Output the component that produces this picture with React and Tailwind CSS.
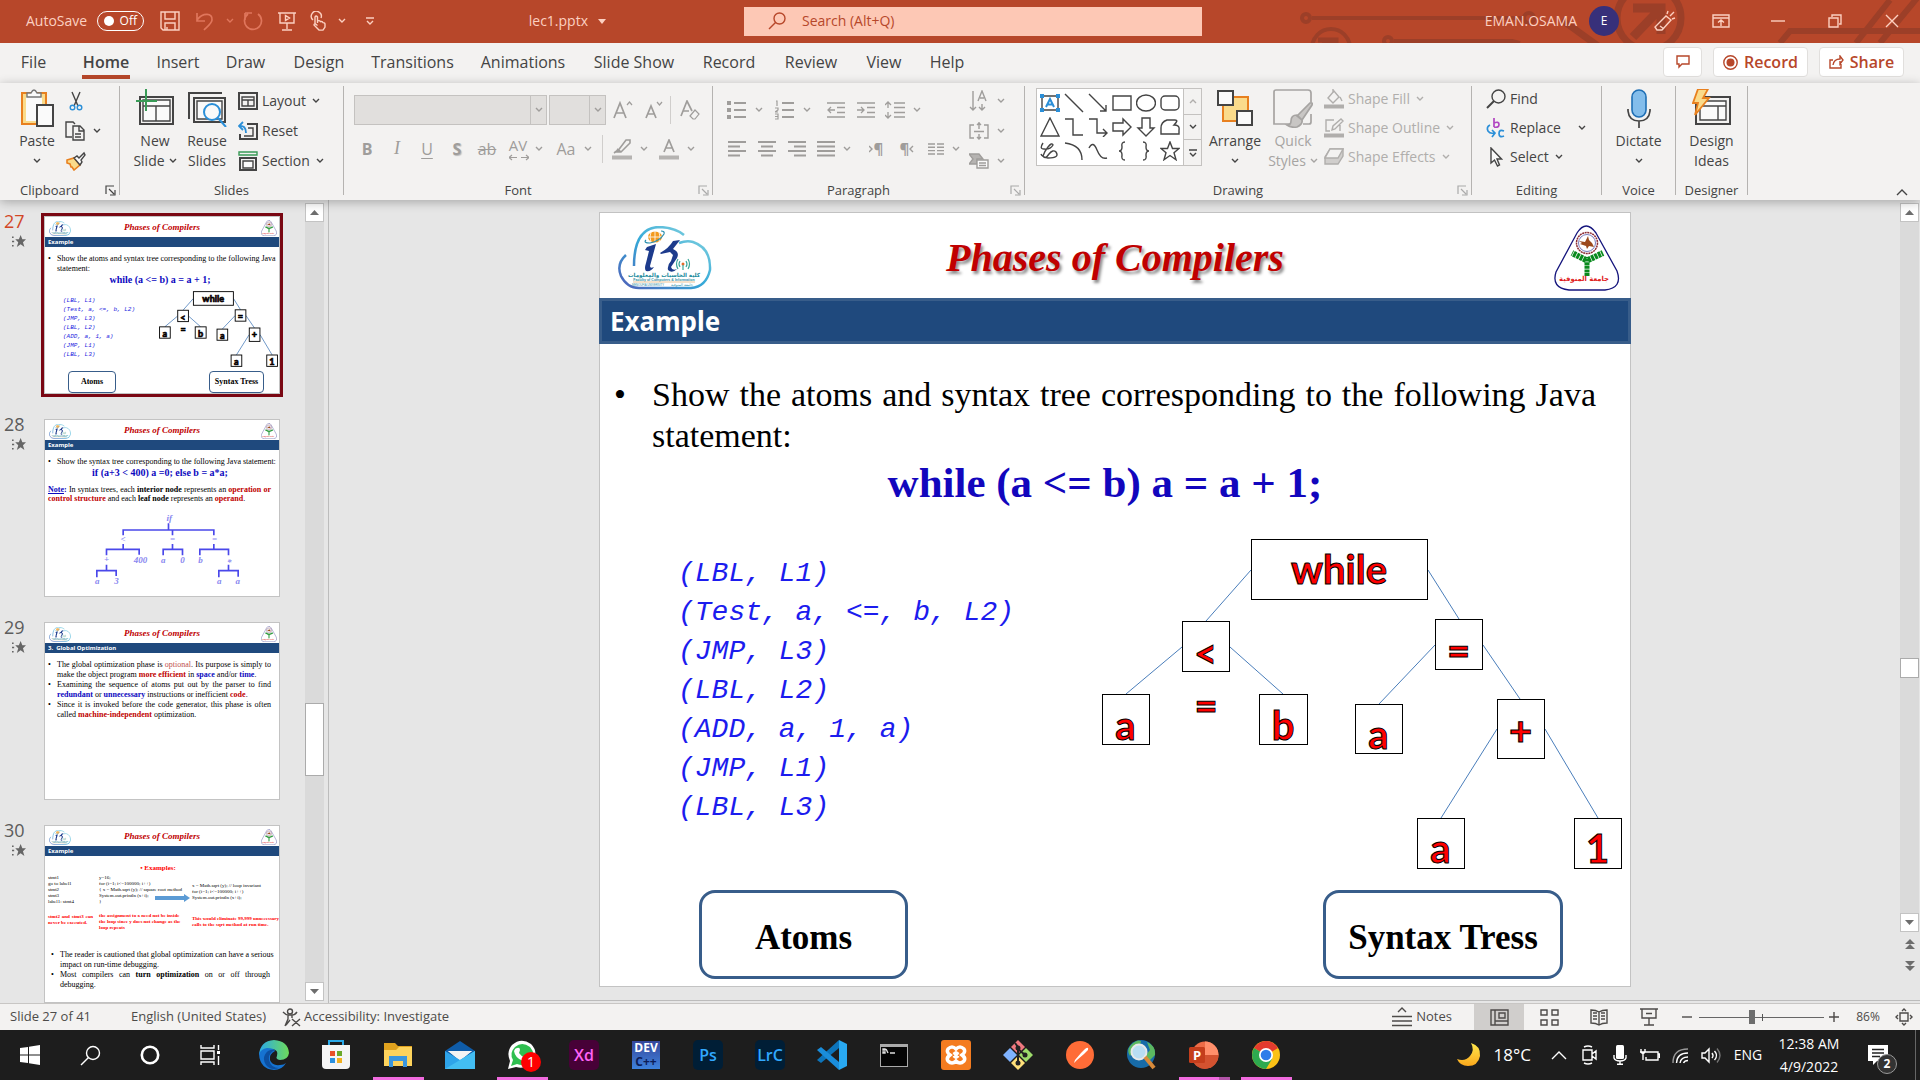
import React from "react";

const Svg = ({ w = 20, h, vb, children, className = "", ...p }) => (
  <svg width={w} height={h || w} viewBox={vb || `0 0 ${w} ${h || w}`} fill="none" stroke="currentColor" strokeWidth="1.4" className={"shrink-0 " + className} aria-hidden="true" {...p}>
    {children}
  </svg>
);

const Chev = ({ className = "" }) => (
  <Svg w={8} h={6} className={className}><path d="M1 1l3 3 3-3" /></Svg>
);

/* ---------- Title bar ---------- */
function TitleBar() {
  return (
    <header className="relative h-[43px] shrink-0 bg-[#b7472a] pb-px text-[#fcd0c1] text-sm flex items-center overflow-hidden">
      <svg className="absolute right-0 top-0" width="640" height="43" viewBox="1280 0 640 43" fill="none" stroke="#9c3f28" strokeWidth="4" aria-hidden="true">
        <circle cx="1306" cy="18" r="4" />
        <path d="M1312 18H1524M1394 41H1512l8 2" />
        <circle cx="1331" cy="48" r="19" />
        <path d="M1318 40h18v3h-14" strokeWidth="5" />
        <circle cx="1388" cy="41" r="4" />
        <circle cx="1529" cy="18" r="5" />
        <path d="M1562 20l36 26" strokeWidth="7" />
        <circle cx="1649" cy="18" r="32" strokeWidth="7" />
        <path d="M1633 8h28v26M1659 10l-26 27" strokeWidth="9" />
        <path d="M1780 43l10-12h130M1856 43l34-43M1880 43l38-46" strokeWidth="6" />
      </svg>
      <div className="relative flex flex-1 items-center pl-[26px]">
        <label className="flex items-center gap-2">
          <span className="w-[63px] whitespace-nowrap">AutoSave</span>
          <input type="checkbox" className="peer sr-only" />
          <span className="flex h-5 w-[47px] items-center justify-between rounded-full border border-white pl-1.5 pr-1.5 text-xs text-white">
            <i className="block size-[10px] rounded-full bg-white" />Off
          </span>
        </label>
        <div className="ml-4 flex items-center">
          <button aria-label="Save" className="w-[35px]">
            <Svg w={20} h={20}><path d="M1 1h18v18H3l-2-2zM5 1v7h10V1M5 19v-7h10v7M7 16v3" /></Svg>
          </button>
          <button aria-label="Undo" className="flex w-[48px] items-center gap-3 text-[#e0765c]">
            <Svg w={19} h={20} strokeWidth="1.7"><path d="M2 2v8h8M2 9C8 1 18 2 17 9c0 3-5 7-8 10" /></Svg><Chev />
          </button>
          <button aria-label="Redo" className="w-[34px] text-[#e0765c]">
            <Svg w={20} h={20} strokeWidth="1.7"><path d="M2 2v7M2 2h7M5 3a8.500 8.500 0 1 0 10 0" /></Svg>
          </button>
          <button aria-label="Start presentation" className="w-[33px]">
            <Svg w={20} h={20} ><path d="M1 2h18M3 2v10h14V2M10 12v6M5 19h10M8.500 4.500v5l4-2.500z" /></Svg>
          </button>
          <button aria-label="Touch mode" className="flex w-[51px] items-center gap-3">
            <Svg w={16} h={20}><path d="M3 9a5 5 0 1 1 8-2M5 13V6q1-2 2.500 0v6-2q2-1 3 .6q2-.6 2.500 1q2 0 2 1.500v3l-2 3H9L4 14q0-1.500 1.500-1l2 1.500" /></Svg><Chev />
          </button>
          <button aria-label="Customize toolbar" className="pl-1">
            <Svg w={10} h={8}><path d="M1 1h8M2 4l3 3 3-3" /></Svg>
          </button>
        </div>
        <button className="ml-auto mr-[138px] flex items-center gap-2.5">lec1.pptx
          <Svg w={8} h={5} stroke="none" fill="currentColor"><path d="M0 0h8l-4 5z" /></Svg>
        </button>
      </div>
      <label className="relative flex h-[29px] w-[458px] items-center gap-4 bg-[#fdc8b5] pl-6 text-[#b7472a]">
        <Svg w={18} h={18}><circle cx="11.500" cy="6.500" r="5.500" /><path d="M7.500 10.500L1 17" /></Svg>
        <input aria-label="Search" placeholder="Search (Alt+Q)" className="flex-1 bg-transparent outline-none placeholder:text-[#b7472a]" />
      </label>
      <div className="relative flex flex-1 items-center justify-end">
        <span>EMAN.OSAMA</span>
        <span className="ml-3 grid size-[30px] place-items-center rounded-full bg-[#37307a] text-xs text-white">E</span>
        <div className="ml-[26px] flex items-center">
          <button aria-label="What's new" className="grid w-10 place-items-center">
            <Svg w={22} h={22}><path d="M3 20l-2-3L12 6l5 4-9 10zM6 16l4 3M13 4l1-3M16 6l4-4M18 9l3-1" /></Svg>
          </button>
          <button aria-label="Ribbon display options" className="ml-4 grid w-10 place-items-center">
            <Svg w={18} h={14}><path d="M1 1h16v12H1zM1 4h16M9 12V6M6 8.500L9 6l3 2.500" /></Svg>
          </button>
          <button aria-label="Minimize" className="grid w-[57px] place-items-center ml-2"><Svg w={14} h={4}><path d="M0 2h14" /></Svg></button>
          <button aria-label="Restore" className="grid w-[57px] place-items-center"><Svg w={14} h={14}><path d="M1 4h9v9H1zM4 3V1h9v9h-2" /></Svg></button>
          <button aria-label="Close" className="grid w-[57px] place-items-center"><Svg w={14} h={14}><path d="M1 1l12 12M13 1L1 13" /></Svg></button>
        </div>
      </div>
    </header>
  );
}

/* ---------- Tabs ---------- */
const tabs = [
  ["File", "w-[53px] mr-2"], ["Home", "w-[76px] font-semibold"], ["Insert", "w-[68px]"], ["Draw", "w-[67px]"], ["Design", "w-[80px]"],
  ["Transitions", "w-[107px]"], ["Animations", "w-[114px]"], ["Slide Show", "w-[108px]"], ["Record", "w-[82px]"],
  ["Review", "w-[82px]"], ["View", "w-[64px]"], ["Help", "w-[62px]"],
];
function Tabs() {
  return (
    <nav className="flex h-10 shrink-0 items-center bg-[#f3f2f1] pr-4 pb-0.5 text-[#444]">
      <div className="flex h-full items-center pl-[7px] text-base">
        {tabs.map(([t, c]) => (
          <button key={t} className={"relative flex h-full items-center justify-center whitespace-nowrap " + c}>
            {t}
            {t === "Home" && <i className="absolute bottom-0.5 left-[14px] right-[14px] h-1 bg-[#b7472a]" />}
          </button>
        ))}
      </div>
      <div className="ml-auto flex gap-[11px] text-base font-semibold text-[#b7472a]">
        <button aria-label="Comments" className="grid h-[30px] w-[39px] place-items-center rounded-sm border border-[#e1dfdd] bg-white">
          <Svg w={14} h={14}><path d="M1 1h12v8H6l-3 3V9H1z" /></Svg>
        </button>
        <button className="flex h-[30px] w-[95px] items-center justify-center gap-1.5 rounded-sm border border-[#e1dfdd] bg-white">
          <Svg w={15} h={15}><circle cx="7.500" cy="7.500" r="6.700" /><circle cx="7.500" cy="7.500" r="4" fill="currentColor" stroke="none" /></Svg>Record
        </button>
        <button className="flex h-[30px] w-[85px] items-center justify-center gap-1.5 rounded-sm border border-[#e1dfdd] bg-white">
          <Svg w={15} h={14}><path d="M4 5H1v8h11V9M4 10q1-6 7-6V1l3 4-3 4V6" /></Svg>Share
        </button>
      </div>
    </nav>
  );
}

/* ---------- Ribbon ---------- */
function Group({ label, w, launcher, dim, children }) {
  return (
    <section className={"relative mt-[3px] flex shrink-0 flex-col pr-px pb-px " + w}>
      <i className="absolute bottom-[5px] right-0 top-0 w-px bg-[#b5b3b1]" />
      <div className="flex flex-1">{children}</div>
      <div className={"relative h-[18px] text-center text-[13px] leading-[18px] " + (launcher ? "pr-5" : "")}>
        {label}
        {launcher && (
          <button aria-label={label + " settings"} className={"absolute bottom-[3px] right-[3px] " + (dim ? "text-[#aaa]" : "")}>
            <Svg w={11} h={11} strokeWidth="1.200"><path d="M1 9V1h8M4 4l5 5M10 5v5H5" /></Svg>
          </button>
        )}
      </div>
    </section>
  );
}
const Big = ({ icon, l1, l2, chev, w, dim }) => (
  <button className={"flex flex-col items-center pt-[2px] leading-5 " + w + (dim ? " text-[#a6a4a2]" : "")}>
    <span className="mb-[3px] grid h-10 place-items-center">{icon}</span>
    <span>{l1}</span>
    <span className="flex h-5 items-center gap-1">{l2}{chev && <Chev />}</span>
  </button>
);
const Row = ({ icon, t, chev, h = "h-[30px]", dim, gap = "gap-1.5" }) => (
  <button className={"flex items-center whitespace-nowrap " + gap + " " + h + (dim ? " text-[#b0aeac]" : "")}>
    <span className="grid w-5 place-items-center">{icon}</span>
    <span className="flex items-center gap-1.5 -ml-0.5">{t}{chev && <Chev />}</span>
  </button>
);
const Cell = ({ w = "w-[30px]", label, chev, children }) => (
  <button aria-label={label} className={"flex h-[30px] items-center justify-center gap-2 " + w}>{children}{chev && <Chev />}</button>
);

const Lines = ({ x = [0, 0, 0, 0], e = [18, 12, 18, 12] }) => (
  <Svg w={18} h={18} strokeWidth="2">{x.map((a, i) => <path key={i} d={`M${a} ${2 + i * 4.500}H${e[i]}`} />)}</Svg>
);
const shapes = [
  <><path d="M2 3h16v14H2z" /><path d="M6 14l4-8 4 8M7.500 11.500h5" stroke="#2b8fd8" strokeWidth="2" /><g fill="#2b8fd8" stroke="none"><path d="M0 1h4v4H0zM16 1h4v4h-4zM0 15h4v4H0zM16 15h4v4h-4z" /></g></>,
  <path d="M1 1l18 18" />, <path d="M1 1l17 17M18 12v6h-6" />, <path d="M1 3h18v14H1z" />, <ellipse cx="10" cy="10" rx="9.500" ry="8" />, <rect x="1" y="3" width="18" height="14" rx="4" />,
  <path d="M10 1l9 18H1z" />, <path d="M1 2h8v16h10" />, <path d="M1 2h8v14h10M15 12l4 4-4 4" />, <path d="M1 6h10V2l8 8-8 8v-4H1z" />, <path d="M6 1h8v10h4l-8 8-8-8h4z" />, <path d="M7 3h8q4 0-1 5 6 0 5 5v4H1v-6q0-6 6-8z" />,
  <path d="M3 2Q-1 8 4 8q6 1 9-4-1-3-5 2-4 5-5 9 2 4 6-2 4-5 7-2 4 6-8 6-6-1-7-4" />, <path d="M1 2q17 2 17 17" />, <path d="M1 7q4-8 8 2t10 8" />, <path d="M13 1q-4 0-3 5 0 4-3 4 3 0 3 4-1 5 3 5" />, <path d="M7 1q4 0 3 5 0 4 3 4-3 0-3 4 1 5-3 5" />, <path d="M10 1l2.500 6.500H19l-5 4.200 2 7-6-4.200-6 4.200 2-7-5-4.200h6.500z" />,
];

function Ribbon() {
  return (
    <div className="flex h-[117px] shrink-0 bg-[#f3f2f1] text-sm text-[#444] relative z-10 shadow-[0_2px_10px_rgba(0,0,0,0.28)]">
      <Group label="Clipboard" w="w-[120px]" launcher>
        <Big w="ml-[17px] w-[40px]" l1="Paste" chev icon={
          <Svg w={36} h={40}><path d="M3 5h24v31H3z" fill="#fadb8b" stroke="#e8801f" strokeWidth="2" /><path d="M7 9h16v24H7z" fill="#fafafa" stroke="none" /><path d="M8 9V5h4q3-6 6 0h4v4z" fill="#fafafa" stroke="#777" /><path d="M18 17h16v21H18z" fill="#fafafa" strokeWidth="2" /></Svg>} />
        <div className="ml-1 flex flex-col">
          <Cell label="Cut"><Svg w={14} h={20}><path d="M3 1l6 14M11 1L5 15" /><circle cx="3.500" cy="16.500" r="2.300" stroke="#2b8fd8" /><circle cx="10.500" cy="16.500" r="2.300" stroke="#2b8fd8" /></Svg></Cell>
          <Cell label="Copy" chev w="w-[44px]"><Svg w={20} h={20}><path d="M7 16H1V1h7l2 2M8 5h7l4 4v10H8zM14 5v5h5M10 13h6M10 16h6" /></Svg></Cell>
          <Cell label="Format Painter"><Svg w={20} h={20}><path d="M1 9l7-2 6 7-6 5-2-3-1 0-1-3-3-1z" fill="#fadb8b" stroke="#e8801f" strokeWidth="1.600" /><path d="M8 7l3-2 2 2 5-5 1 2-4 5 1 2-2 3z" fill="#fafafa" /></Svg></Cell>
        </div>
      </Group>

      <Group label="Slides" w="w-[224px]">
        <Big w="ml-[7px] w-[56px]" l1="New" l2="Slide" chev icon={
          <Svg w={40} h={38}><path d="M5 8h33v27H5z" strokeWidth="2" /><path d="M8 11h27v21H8z" fill="#fafafa" /><path d="M8 17h27M21 17v15" /><path d="M11 0v22M1 12h21" stroke="#3a9b57" strokeWidth="2" /></Svg>} />
        <Big w="w-[48px]" l1="Reuse" l2="Slides" icon={
          <Svg w={40} h={38}><path d="M2 30V4h33" strokeWidth="2" /><path d="M7 9h31v24H7z" strokeWidth="2" /><path d="M10 12h25v18H10z" fill="#fafafa" /><circle cx="25" cy="23" r="8" fill="#fafafa" stroke="#2b8fd8" strokeWidth="2" /><path d="M31 29l8 9" stroke="#2b8fd8" strokeWidth="2" /></Svg>} />
        <div className="ml-[7px] flex flex-col">
          <Row t="Layout" chev icon={<Svg w={20} h={18}><path d="M1 1h18v16H1z" strokeWidth="2" /><path d="M4 5h12v9H4zM4 8h12M10 8v6" /></Svg>} />
          <Row t="Reset" icon={<Svg w={20} h={20}><path d="M9 3h10v15H2v-5" strokeWidth="2" /><path d="M10 7h5v8H6" /><path d="M5 1L1 5l4 4M1 5q7-1 7 7" stroke="#2b8fd8" strokeWidth="1.800" /></Svg>} />
          <Row t="Section" chev icon={<Svg w={20} h={20}><path d="M1 1h18v3H1z" stroke="#3a9b57" /><path d="M2 7h16v12H2z" strokeWidth="2" /><path d="M5 10h10v7H5z" fill="#fafafa" /></Svg>} />
        </div>
      </Group>

      <Group label="Font" w="w-[369px]" launcher dim>
        <div className="flex flex-1 flex-col pl-[8px] text-[#9f9d9b]">
          <div className="mt-[9px] flex h-[30px] items-center">
            <div className="ml-[2px] flex h-full w-[193px] border border-[#c4c2c0] bg-[#e1dfdd]"><input aria-label="Font name" disabled className="w-0 flex-1" /><button aria-label="Fonts" className="grid w-4 place-items-center border-l border-[#c4c2c0]"><Chev /></button></div>
            <div className="ml-[2px] flex h-full w-[57px] border border-[#c4c2c0] bg-[#e1dfdd]"><input aria-label="Font size" disabled className="w-0 flex-1" /><button aria-label="Sizes" className="grid w-4 place-items-center border-l border-[#c4c2c0]"><Chev /></button></div>
            <Cell label="Increase font size" w="w-[34px]"><Svg w={20} h={18} strokeWidth="1.700"><path d="M1 17L7 2l6 15M3 12h8" /><path d="M14 4l2.500-3 2.500 3" strokeWidth="1.200" /></Svg></Cell>
            <Cell label="Decrease font size" w="w-[28px]"><Svg w={18} h={18} strokeWidth="1.700"><path d="M1 17L6 5l5 12M3 13h6" /><path d="M12 1l2.500 3L17 1" strokeWidth="1.200" /></Svg></Cell>
            <i className="mx-0.5 h-7 w-px bg-[#d0cecc]" />
            <Cell label="Clear formatting" w="w-[34px]"><Svg w={20} h={20} strokeWidth="1.700"><path d="M1 16L7 1l5 10M3 11h6" /><path d="M10 16l5-6 4 4-4 5h-2z" strokeWidth="1.200" /></Svg></Cell>
          </div>
          <div className="mt-[9px] flex items-center">
            <Cell label="Bold"><b className="text-base">B</b></Cell>
            <Cell label="Italic"><i className="font-['Liberation_Serif',serif] text-[18px]">I</i></Cell>
            <Cell label="Underline"><u className="text-base underline-offset-3">U</u></Cell>
            <Cell label="Shadow"><b className="text-base [text-shadow:1px_1px_1px_#bbb]">S</b></Cell>
            <Cell label="Strikethrough"><s className="text-base">ab</s></Cell>
            <Cell label="Character spacing" chev w="w-[48px]"><span className="relative text-[15px] leading-4 pb-2">AV<Svg w={20} h={7} className="absolute bottom-0 left-0" strokeWidth="1.200"><path d="M3 1L0 3.500 3 6M0 3.500h8M17 1l3 2.500L17 6M12 3.500h8" /></Svg></span></Cell>
            <Cell label="Change case" chev w="w-[48px]"><span className="text-base">Aa</span></Cell>
            <i className="mx-1 h-7 w-px bg-[#d0cecc]" />
            <Cell label="Highlight" chev w="w-[46px]"><Svg w={20} h={21}><path d="M5 13L14 1h4v3L9 13zM5 10l4 3M2 14l4-3" strokeWidth="1.600" /><path d="M0 18.500h20" strokeWidth="4" stroke="#b5b3b1" /></Svg></Cell>
            <Cell label="Font color" chev w="w-[48px]"><Svg w={20} h={21}><path d="M5 13L10 1l5 12M7 9h6" strokeWidth="1.700" /><path d="M0 18.500h20" strokeWidth="4" stroke="#b5b3b1" /></Svg></Cell>
          </div>
        </div>
      </Group>

      <Group label="Paragraph" w="w-[312px]" launcher dim>
        <div className="flex flex-col pl-[14px] text-[#9f9d9b]">
          <div className="mt-[9px] flex h-[30px] items-center">
            <Cell label="Bullets" chev w="w-[36px]"><Svg w={20} h={18} strokeWidth="2"><path d="M7 2h12M7 9h12M7 16h12" /><path d="M0 2h4M0 9h4M0 16h4" strokeWidth="4" /></Svg></Cell>
            <Cell label="Numbering" chev w="w-[60px]"><Svg w={20} h={20} strokeWidth="2"><path d="M7 3h12M7 10h12M7 17h12" /><path d="M1 1h1v5M0 8h3v2l-3 2h3M0 14h3v5H0M0 16.500h3" strokeWidth="1.200" /></Svg></Cell>
            <Cell label="Decrease indent" w="w-[26px]"><Svg w={18} h={18} strokeWidth="1.700"><path d="M0 2h18M10 6.500h8M10 11.500h8M0 16h18" /><path d="M8 9H1M4 6L1 9l3 3" strokeWidth="1.300" /></Svg></Cell>
            <Cell label="Increase indent" w="w-[34px]"><Svg w={18} h={18} strokeWidth="1.700"><path d="M0 2h18M10 6.500h8M10 11.500h8M0 16h18" /><path d="M0 9h7M4 6l3 3-3 3" strokeWidth="1.300" /></Svg></Cell>
            <Cell label="Line spacing" chev w="w-[40px]"><Svg w={20} h={18} strokeWidth="1.700"><path d="M9 2h11M9 6.500h11M9 11.500h11M9 16h11" /><path d="M3 1v6M0 4l3-3 3 3M3 17v-6M0 14l3 3 3-3" strokeWidth="1.300" /></Svg></Cell>
          </div>
          <div className="mt-[9px] flex items-center">
            <Cell label="Align left" w="w-[19px]"><Lines /></Cell>
            <Cell label="Align center" w="w-[41px]"><Lines x={[0, 3, 0, 3]} e={[18, 15, 18, 15]} /></Cell>
            <Cell label="Align right" w="w-[19px]"><Lines x={[0, 6, 0, 6]} e={[18, 18, 18, 18]} /></Cell>
            <Cell label="Justify" chev w="w-[56px]"><Lines e={[18, 18, 18, 18]} /></Cell>
            <Cell label="Left to right" w="w-[28px]"><span className="flex items-center font-bold text-[15px]"><Svg w={5} h={8}><path d="M0 1l3 3-3 3" /></Svg>¶</span></Cell>
            <Cell label="Right to left" w="w-[34px]"><span className="flex items-center font-bold text-[15px]">¶<Svg w={5} h={8}><path d="M4 1L1 4l3 3" /></Svg></span></Cell>
            <Cell label="Columns" chev w="w-[40px]"><Svg w={16} h={12}><path d="M0 1h7M0 4.300h7M0 7.600h7M0 11h7M9 1h7M9 4.300h7M9 7.600h7M9 11h7" /></Svg></Cell>
          </div>
        </div>
        <div className="ml-auto mr-[14px] flex flex-col text-[#9f9d9b]">
          <Cell label="Text direction" chev w="w-[46px]"><Svg w={20} h={22}><path d="M4 1v19M1 17l3 3 3-3M13 14v6M10 17l3 3 3-3" /><path d="M9 11l4-10 4 10M11 8h4" /></Svg></Cell>
          <Cell label="Align text" chev w="w-[46px]"><Svg w={20} h={18}><path d="M5 3H1v13h4M15 3h4v13h-4M5 9.500h10M10 0v7M10 12v6M8 3l2-2 2 2M8 15l2 2 2-2" /></Svg></Cell>
          <Cell label="SmartArt" chev w="w-[46px]"><Svg w={20} h={18}><path d="M0 2h10l4 5H8v5H0l4-5z" fill="#b5b3b1" /><path d="M8 8h11v8H8zM10 11h7M10 13.500h7" fill="#fafafa" /></Svg></Cell>
        </div>
      </Group>

      <Group label="Drawing" w="w-[447px]" launcher dim>
        <div className="mt-[2px] ml-[11px] flex h-[78px] border border-[#c4c2c0] bg-white">
          <div className="grid grid-cols-6 content-center gap-x-1 gap-y-1 px-[3px]">
            {shapes.map((s, i) => <button key={i} aria-label={"Shape " + (i + 1)}><Svg w={20} h={20} >{s}</Svg></button>)}
          </div>
          <div className="flex w-[18px] flex-col border-l border-[#c4c2c0] bg-[#f3f2f1]">
            <button aria-label="Up" className="grid flex-1 place-items-center text-[#b0aeac]"><Chev className="rotate-180" /></button>
            <button aria-label="Down" className="grid flex-1 place-items-center border-y border-[#c4c2c0]"><Chev /></button>
            <button aria-label="More shapes" className="grid flex-1 place-items-center"><Svg w={10} h={8}><path d="M1 1h8M2 4l3 3 3-3" /></Svg></button>
          </div>
        </div>
        <Big w="ml-[4px] w-[58px]" l1="Arrange" chev icon={
          <Svg w={38} h={38}><path d="M7 8h25v24H7z" fill="#fadb8b" stroke="#e8801f" strokeWidth="2" /><path d="M2 2h15v14H2zM21 22h15v14H21z" fill="#fafafa" strokeWidth="2" /></Svg>} />
        <Big w="w-[56px] ml-px" dim l1="Quick" l2="Styles" chev icon={
          <Svg w={40} h={40} strokeWidth="1.700"><path d="M18 36H1V4q0-2 2-2h32q3 0 3 3v9M38 26v8q0 2-2 2h-6" /><path d="M24 28L37 15q3-1 2 2L29 32zM24 27q-6 0-6 6 0 4-4 4 4 3 10 2 6-3 5-7z" fill="#c8c6c4" /></Svg>} />
        <div className="ml-[3px] -mt-0.5 flex flex-col">
          <Row dim h="h-[29px]" t="Shape Fill" chev icon={<Svg w={20} h={20}><path d="M4 9l6-7 5 6-6 6zM9 4V0M16 8l2 4" /><path d="M0 17.500h20" strokeWidth="4" /></Svg>} />
          <Row dim h="h-[29px]" t="Shape Outline" chev icon={<Svg w={20} h={20}><path d="M10 2H2v11h4M8 12l1-4 8-7 2 2-8 8zM16 7v6" /><path d="M0 17.500h20" strokeWidth="4" /></Svg>} />
          <Row dim h="h-[29px]" t="Shape Effects" chev icon={<Svg w={20} h={17}><path d="M6 1h13v7l-5 8H1V9z" fill="#d0cecc" /><path d="M6 1h13l-5 9H1z" fill="#f3f2f1" /></Svg>} />
        </div>
      </Group>

      <Group label="Editing" w="w-[130px]">
        <div className="ml-[14px] -mt-0.5 flex flex-col">
          <Row h="h-[29px]" t="Find" icon={<Svg w={20} h={20}><circle cx="12.500" cy="7.500" r="6.500" /><path d="M8 12l-7 7" strokeWidth="2" /></Svg>} />
          <Row h="h-[29px]" t={<span className="w-[62px] text-left">Replace</span>} chev icon={<Svg w={20} h={20}><path d="M8 0v9M8 5q5-2 5 1.500T8 9" stroke="#b146c2" strokeWidth="1.700" /><path d="M18 13q-5-2-5 2.500t5 2.500" stroke="#2b8fd8" strokeWidth="1.700" /><path d="M4 7q-4 2-2 6 2 3 6 2M6 12l3 3-3 4" stroke="#2b8fd8" strokeWidth="1.700" /></Svg>} />
          <Row h="h-[29px]" t="Select" chev icon={<Svg w={14} h={20}><path d="M2 1v15l3.500-3 3 6 2-1-2.500-6h4.500z" fill="#fafafa" /></Svg>} />
        </div>
      </Group>
      <Group label="Voice" w="w-[74px]">
        <Big w="w-full" l1="Dictate" chev icon={<Svg w={24} h={40}><rect x="5" y="2" width="14" height="27" rx="7" fill="#83bdeb" stroke="#1f6fb5" strokeWidth="1.600" /><path d="M1 21v2q1 10 11 10t11-10v-2M12 33v7" strokeWidth="1.700" /></Svg>} />
      </Group>
      <Group label="Designer" w="w-[72px]">
        <Big w="w-full" l1="Design" l2="Ideas" icon={<Svg w={40} h={38}><path d="M4 8h34v27H4z" strokeWidth="2" /><path d="M8 12h26v19H8z" fill="#fafafa" /><path d="M8 17h26M26 17v14" /><path d="M6 0h10l-5 9h6L3 26l3-12H1z" fill="#fadb8b" stroke="#e8801f" strokeWidth="1.800" /></Svg>} />
      </Group>
      <button aria-label="Collapse ribbon" className="ml-auto mb-1 mr-3 self-end"><Svg w={12} h={8} ><path d="M1 7l5-5 5 5" /></Svg></button>
    </div>
  );
}

/* ---------- Slide parts ---------- */
const CloudLogo = ({ className }) => (
  <svg viewBox="0 0 94 64" className={"shrink-0 " + className} fill="none" role="img" aria-label="Faculty of Computers and Information">
    <defs>
      <linearGradient id="cl" x1="0" x2="1" y1="1" y2="0"><stop offset="0" stopColor="#4f5fb8" /><stop offset=".5" stopColor="#35a9d8" /><stop offset="1" stopColor="#8fd8e0" /></linearGradient>
    </defs>
    <path d="M8 29Q-2 38 3 50q6 12 18 12h52q15-1 19-18 1-22-17-28-6-2-14 1M16 40C16 12 26 1 42 1q16 1 24 8" stroke="url(#cl)" strokeWidth="2.500" />
    <ellipse cx="37" cy="11" rx="7" ry="5.500" fill="#f39a1e" /><path d="M30 11h14M37 5v12M33 6q-2 5 0 10M41 6q2 5 0 10" stroke="#fff" strokeWidth=".8" />
    <path d="M28 14q-3 3 4 3 10-2 14-9 1-3-3-3" stroke="#2c8fae" strokeWidth="1.200" />
    <path d="M29 21l9-3-6 22q0 3 4 1-3 5-8 4-2-2 0-8l3-12-4-1z" fill="#1d3b8c" />
    <path d="M42 27q9-5 13-12l7-1-7 9q7 3 4 9l-6 9q1 4 6 2-5 5-9 1-1-5 3-9l2-6-3-3-9 2z" fill="#1d3b8c" />
    <circle cx="65" cy="38" r="1.500" fill="#e46a2b" /><path d="M65 39v5M62 35q-2 3 0 6M68 35q2 3 0 6M60 33q-3 5 0 10M70 33q3 5 0 10" stroke="#3aa79a" strokeWidth="1.200" />
    <text x="46" y="51" fontSize="5.6" fontWeight="bold" textAnchor="middle" fill="#218a9c" fontFamily="DejaVu Sans">كلية الحاسبات والمعلومات</text>
    <text x="46" y="55" fontSize="3.6" fontWeight="bold" textAnchor="middle" fill="#2f8fa5" fontFamily="Liberation Sans">Faculty of Computers &amp; Information</text>
    <path d="M15 56h62" stroke="#e2aa68" strokeWidth=".7" />
    <text x="30" y="60" fontSize="2.8" textAnchor="middle" fill="#2f8fa5" fontFamily="Liberation Sans">MENOUFIA UNIVERSITY</text>
    <text x="64" y="60" fontSize="3.6" textAnchor="middle" fill="#2f8fa5" fontFamily="DejaVu Sans">جامعة المنوفية</text>
  </svg>
);
const TriLogo = ({ className }) => (
  <svg viewBox="0 0 66 66" className={"shrink-0 " + className} fill="none" role="img" aria-label="Menoufia University">
    <path d="M23 8q9-14 19 0l21 38q6 17-12 19H15Q-3 63 2 47z" stroke="#14147c" strokeWidth="1.300" fill="#fff" />
    <circle cx="33" cy="18" r="10.500" stroke="#8c2c34" strokeWidth="1.500" strokeDasharray="2 .6" /><circle cx="33" cy="18" r="8.500" stroke="#5658a8" strokeWidth=".8" />
    <path d="M25 16l6 1 3-6 1 4 3 3 2 4-5-1-2 3-1-3-6-2 2-1z" fill="#9c4a1c" />
    <path d="M33 51V34" stroke="#0a8a1e" strokeWidth="5" strokeDasharray="3 .6" /><path d="M32 35L18 28M34 35l15-7" stroke="#0a8a1e" strokeWidth="6" strokeDasharray="3 .7" />
    <text x="30" y="56" fontSize="6.800" fontWeight="bold" textAnchor="middle" fill="#e02020" fontFamily="DejaVu Sans">جامعة المنوفية</text>
  </svg>
);

const nodes = [
  [1251, 539, 176, 60, "while", 584], [1182, 621, 47, 50, "<", 668], [1435, 619, 47, 50, "=", 665],
  [1102, 694, 47, 50, "a", 740], [1259, 694, 48, 50, "b", 740], [1355, 704, 47, 49, "a", 749],
  [1497, 699, 47, 59, "+", 745], [1417, 818, 47, 50, "a", 863], [1574, 818, 47, 50, "1", 863],
];
const SyntaxTree = ({ small, className }) => (
  <svg viewBox="1100 537 524 334" className={className} fill="none" role="img" aria-label="Syntax tree">
    <path d="M1251 570L1206 621M1428 570L1459 619M1182 647L1126 694M1230 647L1283 694M1435 645L1379 704M1483 645L1520 699M1497 729L1441 818M1545 729L1598 818" stroke="#4a7ebb" strokeWidth={small ? 3.5 : 1} />
    {nodes.map(([x, y, w, h], i) => <rect key={i} x={x + 0.5} y={y + 0.5} width={w} height={h} fill="#fff" stroke="#000" strokeWidth={small ? 4 : 1} />)}
    <g fontFamily="Lato, sans-serif" fontWeight="bold" fontSize="40" fill={small ? "#300" : "#f00"} stroke="#000" strokeWidth={small ? 3 : 1} textAnchor="middle">
      {nodes.map(([x, , w, , t, b], i) => <text key={i} x={x + w / 2} y={b}>{t}</text>)}
      <text x="1206" y="720">=</text>
    </g>
  </svg>
);

const atoms = ["(LBL, L1)", "(Test, a, <=, b, L2)", "(JMP, L3)", "(LBL, L2)", "(ADD, a, 1, a)", "(JMP, L1)", "(LBL, L3)"];
const SERIF = " font-['Liberation_Serif',serif] ";

function Slide() {
  return (
    <article className="flex w-[1032px] flex-col border border-[#c3c3c3] bg-white text-black">
      <div className="flex h-[85px] items-center justify-between pl-[18px] pr-[10px] pt-[5px]">
        <CloudLogo className="h-[64px] w-[94px]" />
        <h1 className={"mr-9 text-[40px] font-bold italic text-[#c00000] [text-shadow:2px_3px_3px_rgba(0,0,0,0.45)]" + SERIF}>Phases of Compilers</h1>
        <TriLogo className="h-[66px] w-[66px]" />
      </div>
      <h2 className="-mx-px flex h-[46px] items-center border-3 border-[#385d8a] bg-[#1f497d] pl-2 pt-px text-[26px] font-bold text-white font-['Noto_Sans',sans-serif]">Example</h2>
      <div className={"relative flex-1" + SERIF}>
        <ul className="pl-[14px] pr-[34px] pt-[30px] text-[34px] leading-[41px]">
          <li className="flex">
            <span className="w-[38px]">•</span>
            <div className="flex-1 whitespace-nowrap">
              <div className="[text-align-last:justify]">Show the atoms and syntax tree corresponding to the following Java</div>
              <div>statement:</div>
            </div>
          </li>
        </ul>
        <p className="mr-5 mt-[2px] text-center text-[43px] font-bold leading-[50px] text-[#1206bd]">while (a &lt;= b) a = a + 1;</p>
        <ul className="pl-[78px] pt-[46px] font-['Liberation_Mono',monospace] text-[28px] italic leading-[39px] text-[#1c1cee]">
          {atoms.map((a, i) => <li key={i}>{a}</li>)}
        </ul>
        <div className="mt-[63px] flex justify-between pl-[99px] pr-[67px] pb-[6px] text-[35px] font-bold">
          <div className="grid h-[89px] w-[209px] place-items-center rounded-2xl border-3 border-[#385d8a] bg-white pt-2">Atoms</div>
          <div className="grid h-[89px] w-[240px] place-items-center rounded-2xl border-3 border-[#385d8a] bg-white pt-2">Syntax Tress</div>
        </div>
        <SyntaxTree className="absolute left-[500px] top-[193px] h-[334px] w-[524px]" />
      </div>
    </article>
  );
}

/* ---------- Thumbnails ---------- */
const J = ({ children, end }) => <div className={"whitespace-nowrap " + (end ? "" : "[text-align-last:justify]")}>{children}</div>;
const Bl = ({ children }) => <li className="flex"><span className="w-[9px] shrink-0">•</span><div className="min-w-0 flex-1">{children}</div></li>;
const R = ({ children }) => <b className="text-[#c00000]">{children}</b>;
const U = ({ children }) => <b className="text-[#0c08c0]">{children}</b>;

function Thumb({ n, title, active, children }) {
  return (
    <li className="flex h-[203px]">
      <div className="w-[41px] shrink-0 pl-[4px]">
        <div className={"-mt-0.5 text-[18px] leading-5 " + (active ? "text-[#d24726]" : "text-[#5c5c5c]")}>{n}</div>
        <Svg w={14} h={13} vb="0 0 13 12" className="ml-2 mt-1 text-[#666]"><path d="M8 0l1.600 4H13l-2.800 2.700L11.500 11 8 8.500 4.500 11l1.300-4.300L3 4h3.400z" fill="currentColor" stroke="none" /><path d="M0 2h1.500M0 6h2M0 10h1.500" /></Svg>
      </div>
      <div className={"mr-auto h-[184px] shrink-0 " + (active ? "bg-[#7a0713] p-[3px]" : "p-[3px]")}>
        <div className="flex h-[178px] w-[236px] flex-col overflow-hidden border border-[#c3c3c3] bg-white text-black">
          <div className="flex h-5 items-center justify-between pl-[4px] pr-[2px] pt-0.5">
            <CloudLogo className="h-[15px] w-[22px]" />
            <div className={"mr-2 text-[9px] font-bold italic text-[#c00000]" + SERIF}>Phases of Compilers</div>
            <TriLogo className="h-[16px] w-[16px]" />
          </div>
          <div className="h-[10px] bg-[#1f497d] pl-[3px] text-[6px] font-bold leading-[10px] text-white font-['Noto_Sans',sans-serif] whitespace-pre">{title}</div>
          <div className={"relative flex-1 text-[8px]" + SERIF}>{children}</div>
        </div>
      </div>
    </li>
  );
}

function Panel() {
  return (
    <aside className="flex w-[329px] shrink-0 border-r border-[#bcbcbc]">
      <ol className="h-full min-w-0 flex-1 overflow-hidden pt-[13px]">
        <Thumb n="27" title="Example" active>
          <ul className="pl-[3px] pr-[7px] pt-[7px] leading-[10px]"><Bl><J>Show the atoms and syntax tree corresponding to the following Java</J><J end>statement:</J></Bl></ul>
          <p className="pr-1 text-center text-[10px] font-bold leading-3 text-[#0c08c0]">while (a &lt;= b) a = a + 1;</p>
          <ul className="pl-[18px] pt-[10px] font-['Liberation_Mono',monospace] text-[6px] italic leading-[9px] text-[#1c1ce0]">{atoms.map((a, i) => <li key={i}>{a}</li>)}</ul>
          <div className="mt-[12px] flex justify-between pl-[23px] pr-[15px] font-bold">
            <div className="grid h-[22px] w-[48px] place-items-center rounded-sm border border-[#385d8a]">Atoms</div>
            <div className="grid h-[22px] w-[55px] place-items-center rounded-sm border border-[#385d8a]">Syntax Tress</div>
          </div>
          <SyntaxTree small className="absolute left-[114px] top-[44px] h-[76px] w-[119px]" />
        </Thumb>
        <Thumb n="28" title="Example">
          <ul className="pl-[3px] pr-[8px] pt-[7px] leading-[10px]"><Bl><J>Show the syntax tree corresponding to the following Java statement:</J></Bl></ul>
          <p className="pr-1 text-center text-[10px] font-bold leading-[11px] text-[#0c08c0]">if (a+3 &lt; 400) a =0; else b = a*a;</p>
          <div className="pl-[3px] pr-[8px] pt-[7px] leading-[9px]">
            <J><U><u>Note</u>:</U> In syntax trees, each <b>interior node</b> represents an <R>operation or</R></J>
            <J end><R>control structure</R> and each <b>leaf node</b> represents an <R>operand</R>.</J>
          </div>
          <svg className="ml-[47px] mt-[8px]" width="152" height="75" viewBox="275 925 455 225" fill="none" stroke="#4a48ea" strokeWidth="5" role="img" aria-label="if tree">
            <path d="M504 962v20M368 998v-16h272v16M516 982v16M368 1024v16M318 1058v-18h98v16M516 1024v16M488 1058v-18h58v18M640 1024v16M598 1058v-18h86v18M318 1086v18M289 1124v-20h58v16M684 1086v18M655 1124v-20h58v18" />
            <g stroke="none" fill="#8a88f0" fontFamily="Liberation Serif" fontWeight="bold" fontStyle="italic" fontSize="27" textAnchor="middle">
              <text x="506" y="956">if</text><text x="368" y="1018">&lt;</text><text x="516" y="1018">=</text><text x="642" y="1018">=</text><text x="318" y="1079">+</text><text x="420" y="1080">400</text><text x="488" y="1080">a</text><text x="546" y="1080">0</text><text x="600" y="1080">b</text><text x="686" y="1086">*</text><text x="290" y="1144">a</text><text x="348" y="1144">3</text><text x="656" y="1144">a</text><text x="712" y="1144">a</text>
            </g>
          </svg>
        </Thumb>
        <Thumb n="29" title="3.  Global Optimization">
          <ul className="pl-[3px] pr-[8px] pt-[7px] leading-[10px]">
            <Bl><J>The global optimization phase is <span className="text-[#c0504d]">optional</span>. Its purpose is simply to</J><J end>make the object program <R>more efficient</R> in <U>space</U> and/or <U>time</U>.</J></Bl>
            <Bl><J>Examining the sequence of atoms put out by the parser to find</J><J end><U>redundant</U> or <U>unnecessary</U> instructions or inefficient <R>code</R>.</J></Bl>
            <Bl><J>Since it is invoked before the code generator, this phase is often</J><J end>called <R>machine-independent</R> optimization.</J></Bl>
          </ul>
        </Thumb>
        <Thumb n="30" title="Example">
          <p className="pr-4 pt-[8px] pl-[8px] text-center text-[7px] font-bold leading-2 text-[#f00]">• Examples:</p>
          <div className="flex pl-[3px] pt-[3px] text-[5px] leading-[6px]">
            <div className="w-[51px] shrink-0">
              <div className="h-[39px]">stmt1<br />go to label1<br />stmt2<br />stmt3<br />label1: stmt4</div>
              <p className="w-[45px] font-bold text-[#f00]"><J>stmt2 and stmt3 can</J><J end>never be executed.</J></p>
            </div>
            <div className="w-[93px] shrink-0 whitespace-nowrap">
              <div className="h-[38px]">y=16;<br />for (i=1; i&lt;=100000; i++)<br />{"{ x = Math.sqrt (y); // square root method"}<br />System.out.println (x+i);<br />{"}"}</div>
              <p className="font-bold text-[#f00]">the assignment to x need not be inside<br />the loop since y does not change as the<br />loop repeats</p>
            </div>
            <div className="whitespace-nowrap pt-[8px]">
              <div className="h-[33px]">x = Math.sqrt (y); // loop invariant<br />for (i=1; i&lt;=100000; i++)<br />System.out.println (x+i);</div>
              <p className="font-bold text-[#f00]">This would eliminate 99,999 unnecessary<br />calls to the sqrt method at run time.</p>
            </div>
          </div>
          <svg className="absolute left-[110px] top-[38px]" width="35" height="8" viewBox="0 0 35 8" aria-hidden="true"><path d="M0 2h29V0l6 4-6 4V6H0z" fill="#5b9bd5" /></svg>
          <ul className="pl-[6px] pr-[9px] pt-[19px] leading-[10px]">
            <Bl><J>The reader is cautioned that global optimization can have a serious</J><J end>impact on run-time debugging.</J></Bl>
            <Bl><J>Most compilers can <b>turn optimization</b> on or off through</J><J end>debugging.</J></Bl>
          </ul>
        </Thumb>
      </ol>
      <div className="mr-1 flex w-[19px] shrink-0 flex-col pt-[3px]">
        <Arrow up />
        <div className="flex-1 bg-[#dadada] pt-[481px]"><div className="h-[73px] border border-[#ababab] bg-white" /></div>
        <Arrow />
        <div className="h-[2px]" />
      </div>
    </aside>
  );
}
const Arrow = ({ up }) => (
  <button aria-label={up ? "Scroll up" : "Scroll down"} className="grid h-[19px] w-[19px] place-items-center border border-[#c3c3c3] bg-white text-[#6d6d6d]">
    <Svg w={9} h={5} stroke="none" className={up ? "rotate-180" : ""}><path d="M0 0h9L4.500 5z" fill="currentColor" /></Svg>
  </button>
);

/* ---------- Status bar ---------- */
function StatusBar() {
  return (
    <footer className="flex h-[27px] shrink-0 items-center border-t border-[#c8c6c4] bg-[#f3f2f1] text-[13px] text-[#4d4b49]">
      <span className="w-[121px] whitespace-nowrap pl-[10px]">Slide 27 of 41</span>
      <button className="w-[161px] whitespace-nowrap pl-[10px] text-left">English (United States)</button>
      <button className="flex items-center gap-[3px] whitespace-nowrap">
        <Svg w={19} h={19}><circle cx="8" cy="3.500" r="2.500" /><path d="M1 4q3 3 5 3h4q3 0 5-3M6 7v4l-3 7M10 7v3M4 17l4-5M10 11l8 7M18 11l-8 7" /></Svg>
        Accessibility: Investigate
      </button>
      <div className="ml-auto flex h-full items-center">
        <button className="flex items-center gap-1 pr-[22px]"><Svg w={20} h={20}><path d="M6 5l4-4 4 4M0 9.500h20M0 14h20M0 18.500h20" /></Svg>Notes</button>
        <button aria-label="Normal" className="grid h-full w-[50px] place-items-center bg-[#d0cecc]"><Svg w={19} h={17}><path d="M1 1h17v15H1zM5 1v15M5 12h13M9 4h6v5H9z" /></Svg></button>
        <button aria-label="Slide Sorter" className="grid h-full w-[50px] place-items-center"><Svg w={19} h={17}><path d="M1 1h6v5H1zM12 1h6v5h-6zM1 11h6v5H1zM12 11h6v5h-6z" /></Svg></button>
        <button aria-label="Reading View" className="grid h-full w-[50px] place-items-center"><Svg w={18} h={17}><path d="M9 3Q6 1 1 1v13q5 0 8 2 3-2 8-2V1q-5 0-8 2zM9 3v13M3 4h4M3 7h4M3 10h4M11 4h4M11 7h4M11 10h4" /></Svg></button>
        <button aria-label="Slide Show" className="grid h-full w-[50px] place-items-center"><Svg w={18} h={18}><path d="M0 1h18M2 1v9h14V1M9 10v7M4 17h10M6 5.500h6" /></Svg></button>
        <button aria-label="Zoom out" className="ml-[4px] grid w-[18px] place-items-center"><Svg w={10} h={10}><path d="M0 5h10" /></Svg></button>
        <label className="relative mx-[3px] flex w-[125px] items-center">
          <input type="range" aria-label="Zoom" min="0" max="100" defaultValue="42" className="h-px w-full appearance-none bg-[#666] [&::-webkit-slider-thumb]:h-[14px] [&::-webkit-slider-thumb]:w-[6px] [&::-webkit-slider-thumb]:appearance-none [&::-webkit-slider-thumb]:bg-[#6d6d6d]" />
          <i className="absolute left-1/2 h-[7px] w-px bg-[#555]" />
        </label>
        <button aria-label="Zoom in" className="grid w-[14px] place-items-center"><Svg w={10} h={10}><path d="M0 5h10M5 0v10" /></Svg></button>
        <span className="w-[54px] text-center text-xs">86%</span>
        <button aria-label="Fit slide" className="mr-[7px]"><Svg w={18} h={18}><path d="M5 5h8v8H5zM7 3l2-2 2 2M7 15l2 2 2-2M3 7L1 9l2 2M15 7l2 2-2 2" /></Svg></button>
      </div>
    </footer>
  );
}

/* ---------- Taskbar ---------- */
const Tile = ({ bg, fg, t }) => <span className={"grid size-[30px] place-items-center rounded-[5px] text-base font-semibold leading-none " + bg + " " + fg}>{t}</span>;
const apps = [
  ["Edge", <Svg w={30} h={30} stroke="none"><defs><linearGradient id="eg" x1="0" x2="1"><stop offset="0" stopColor="#2aa9e8" /><stop offset="1" stopColor="#6ddb5a" /></linearGradient></defs><path d="M0 15Q1 1 15 0q14 1 15 13-1 7-9 7-5-1-3-4 2-6-5-7Q4 8 0 15z" fill="url(#eg)" /><path d="M0 14q2-5 8-6 7 0 8 3-6 3-5 9 2 6 10 5 4 0 6-2-4 7-12 7Q1 29 0 14z" fill="#1673d1" /><path d="M16 10q-7 3-6 10 2 8 10 8-8 3-13-3-5-8 2-14 4-2 7-1z" fill="#0c4fa0" /></Svg>],
  ["Store", <Svg w={30} h={30} stroke="none"><path d="M8 6V1h14v5" stroke="#2aa9e8" strokeWidth="2" /><path d="M1 5h28v20q0 4-4 4H5q-4 0-4-4z" fill="#f4f4f4" /><path d="M9 11h5v5H9z" fill="#e8502a" /><path d="M16 11h5v5h-5z" fill="#6aa82a" /><path d="M9 18h5v5H9z" fill="#2a90e0" /><path d="M16 18h5v5h-5z" fill="#f2b01e" /></Svg>],
  ["File Explorer", <Svg w={28} h={24} stroke="none"><path d="M0 0h11l3 3h14v20H0z" fill="#e0a21e" /><path d="M0 7h12l3-3h13v19H0z" fill="#fdd35c" /><path d="M5 13h18v11h-4v-6H9v6H5z" fill="#3a96dd" /></Svg>, "on"],
  ["Mail", <Svg w={30} h={28} stroke="none"><path d="M0 10L15 0l15 10v18H0z" fill="#0f5ca8" /><path d="M3 10h24L15 20z" fill="#f4f4f4" /><path d="M0 10l15 9 15-9v18H0z" fill="#2ea4ea" /><path d="M3 10h24L15 18z" fill="#f4f4f4" /><path d="M0 28L30 10v18z" fill="#43bdf2" /></Svg>],
  ["WhatsApp", <span className="relative"><Svg w={30} h={30} stroke="none"><path d="M1 29l2-8Q-1 12 5 5q9-8 19-1 7 7 3 16-7 10-18 7z" fill="#fff" /><path d="M4 26l2-6Q2 13 8 7q7-6 15 0 6 7 1 14-6 6-14 3z" fill="#2fbf50" /><path d="M10 8q3-1 3 2l-1 3q3 4 6 5l2-2q3 0 3 2-2 4-7 3-8-3-9-10 1-3 3-3z" fill="#fff" /></Svg><b className="absolute -bottom-0.5 -right-1 grid size-[20px] place-items-center rounded-full bg-[#f00] text-sm font-normal text-white">1</b></span>, "on"],
  ["Adobe XD", <Tile bg="bg-[#470137]" fg="text-[#ff61f6]" t="Xd" />],
  ["Dev C++", <span className="flex h-[28px] w-[28px] flex-col items-center bg-linear-to-b from-[#35479b] to-[#3d82dd] text-[12px] font-bold leading-[14px] text-white"><span>DEV</span><span className="text-[#0c1d58]">C++</span></span>],
  ["Photoshop", <Tile bg="bg-[#001e36]" fg="text-[#31a8ff]" t="Ps" />],
  ["Lightroom Classic", <Tile bg="bg-[#001e36]" fg="text-[#31a8ff]" t="LrC" />],
  ["VS Code", <Svg w={30} h={30} stroke="none"><path d="M22 0l8 4v22l-8 4z" fill="#29a9f2" /><path d="M22 0v8L4 23 0 20z" fill="#0d74ba" /><path d="M22 30v-8L4 7 0 10z" fill="#1a8ddb" /></Svg>],
  ["Command Prompt", <Svg w={28} h={23} stroke="none"><path d="M0 0h28v23H0z" fill="#aaa" /><path d="M1 3h26v19H1z" fill="#050505" /><path d="M3 5h2v1H3zM3 8h2v1H3zM6 5l2 4M10 9h5" stroke="#ddd" /></Svg>],
  ["XAMPP", <Svg w={30} h={30} stroke="none"><rect width="30" height="30" rx="3" fill="#f47c20" /><path d="M7 9q4-4 8 0 4-4 8 0 2 3-2 6 4 3 2 6-4 4-8 0-4 4-8 0-2-3 2-6-4-3-2-6zM13 12l4 6M17 12l-4 6" stroke="#fff" strokeWidth="3.500" fill="none" /></Svg>],
  ["Git", <Svg w={30} h={30} stroke="none"><path d="M15 0l7 7-7 7-7-7z" fill="#f0797f" /><path d="M7 8l7 7-7 7-7-7z" fill="#80b3ff" /><path d="M23 8l7 7-7 7-7-7z" fill="#9ddb6b" /><path d="M15 16l7 7-7 7-7-7z" fill="#ffe07a" /><path d="M12 3l3 4v17M15 9l7 6" stroke="#222" strokeWidth="2" /><g fill="#222"><circle cx="15" cy="8" r="2.500" /><circle cx="15" cy="23" r="2.500" /><circle cx="22" cy="15" r="2.500" /></g></Svg>],
  ["Postman", <Svg w={28} h={28} stroke="none"><circle cx="14" cy="14" r="14" fill="#ff6c37" /><path d="M8 22l1-3 6-7 4-4q4-3 3 1l-4 4-7 6z" fill="#fff" /></Svg>],
  ["Network Search", <Svg w={30} h={30} stroke="none"><circle cx="14" cy="14" r="14" fill="#176ba8" /><path d="M4 5q6-6 10-4l-1 5-6 4-4 6Q-1 10 4 5zM20 2q9 4 8 13l-6 6-4-5 5-6z" fill="#5cb860" /><circle cx="12" cy="12" r="7.500" fill="#b9ddf2" stroke="#e8e8e8" strokeWidth="2" /><path d="M18 17l9 11" stroke="#d88a3a" strokeWidth="4" /></Svg>],
  ["PowerPoint", <Svg w={30} h={28} stroke="none"><circle cx="16" cy="14" r="13.500" fill="#ed6c47" /><path d="M16 .5A13.500 13.500 0 0 1 29.500 14H16z" fill="#ff8f6b" /><path d="M29.500 14A13.500 13.500 0 0 1 3 18l13-4z" fill="#d35230" /><rect y="6" width="16" height="16" rx="1.500" fill="#c43e1c" /><text x="8" y="19" fontSize="13" fontWeight="bold" fontFamily="Open Sans" fill="#fff" textAnchor="middle">P</text></Svg>, "two"],
  ["Chrome", <Svg w={28} h={28} stroke="none"><circle cx="14" cy="14" r="14" fill="#fbc116" /><path d="M14 14L1.900 7A14 14 0 0 1 26.100 7z" fill="#e33b2e" /><path d="M14 14L1.900 7A14 14 0 0 0 14 28l6-10z" fill="#2da94f" /><circle cx="14" cy="14" r="7" fill="#fff" /><circle cx="14" cy="14" r="5.300" fill="#2f7de9" /></Svg>, "on"],
];

function Taskbar() {
  return (
    <footer className="flex h-[50px] shrink-0 bg-[#1d1d1d] text-white">
      {[
        ["Start", <Svg w={20} h={20} stroke="none"><path d="M0 3l8-1v7.500H0zM9 1.800L20 0v9.500H9zM0 10.500h8V18l-8-1zM9 10.500h11V20L9 18.200z" fill="#fff" /></Svg>],
        ["Search", <Svg w={21} h={21} ><circle cx="13" cy="8" r="6.500" /><path d="M8.500 12.500L1 20" /></Svg>],
        ["Cortana", <Svg w={20} h={20} strokeWidth="2.600"><circle cx="10" cy="10" r="8.200" /></Svg>],
        ["Task View", <Svg w={21} h={20}><path d="M1 0v3h13V0M1 20v-3h13v3M1 6h13v8H1zM18.500 0v5M18.500 11v9" /><path d="M17 6h3v3h-3z" fill="#fff" stroke="none" /></Svg>],
      ].map(([n, i]) => <button key={n} aria-label={n} className="grid w-[60px] shrink-0 place-items-center">{i}</button>)}
      <div className="ml-[3px] flex">
        {apps.map(([n, i, s]) => (
          <button key={n} aria-label={n} className="relative grid w-[62px] place-items-center">
            {i}
            {s && <i className="absolute bottom-0 left-[6px] h-[3px] w-[51px] bg-[#f06ade]" />}
            {s === "two" && <i className="absolute bottom-0 left-[46px] h-[3px] w-[11px] bg-[#b254a8]" />}
          </button>
        ))}
      </div>
      <div className="ml-auto flex items-center">
        <button className="flex items-center gap-[13px] text-[17px]">
          <Svg w={24} h={24} stroke="none"><defs><linearGradient id="mn" x1="0" x2="0" y1="0" y2="1"><stop offset="0" stopColor="#ffe94d" /><stop offset="1" stopColor="#fba81c" /></linearGradient></defs><path d="M14 0q10 3 9 13-2 10-12 10-8 0-11-7 8 3 13-3t1-13z" fill="url(#mn)" /></Svg>
          18°C
        </button>
        <button aria-label="Hidden icons" className="ml-[12px] grid w-[32px] place-items-center"><Svg w={16} h={9}><path d="M1 8l7-7 7 7" /></Svg></button>
        <button aria-label="Meet now" className="grid w-[30px] place-items-center"><Svg w={16} h={20}><path d="M1 5h9v10H1zM10 9l4-3v8l-4-3M2 2q4-2 8 0M2 18q4 2 8 0" /></Svg></button>
        <button aria-label="Microphone" className="grid w-[29px] place-items-center"><Svg w={14} h={20}><rect x="3" y="0" width="8" height="14" rx="1.500" fill="#fff" stroke="none" /><path d="M1 10v3q1 3 6 3t6-3v-3M7 16v3M4 19.300h6" /></Svg></button>
        <button aria-label="Battery" className="grid w-[31px] place-items-center"><Svg w={20} h={15}><path d="M6 4h12v8H6V9M18 6h1.500v4M1 1v3q2 3 4 0V1M0 4h6M3 6v6" /></Svg></button>
        <button aria-label="Wi-Fi" className="grid w-[31px] place-items-center"><Svg w={17} h={17}><path d="M1 16Q1 2 16 2" stroke="#999" /><path d="M4.500 16Q5 6 16 6M8 16q1-6 8-6M11.500 16q1-2.500 4.500-2.500" /></Svg></button>
        <button aria-label="Volume" className="grid w-[30px] place-items-center"><Svg w={20} h={17}><path d="M1 6h3l4-4v13l-4-4H1zM11 6q2 2.500 0 5M13.500 4q4 4.500 0 9" /><path d="M16 1.500q6 7 0 14" stroke="#777" /></Svg></button>
        <button className="w-[44px] text-center text-sm">ENG</button>
        <button className="ml-1.5 mr-2 w-[66px] text-center text-sm leading-[23px] whitespace-nowrap">12:38 AM<br />4/9/2022</button>
        <button aria-label="Notifications" className="relative ml-[18px] mr-[27px]">
          <Svg w={20} h={20} stroke="none"><path d="M0 0h20v16H9l-4 4v-4H0z" fill="#fff" /><path d="M4 4.500h12M4 8h12M4 11.500h8" stroke="#222" /></Svg>
          <b className="absolute -right-[9px] top-[9px] grid size-5 place-items-center rounded-full border border-[#999] bg-[#333] text-xs">2</b>
        </button>
        <i className="mr-1 h-[50px] w-px bg-[#666]" />
      </div>
    </footer>
  );
}

export default function App() {
  return (
    <div className="flex h-screen min-w-[1800px] flex-col overflow-hidden bg-[#e6e6e6] font-['Open_Sans','Noto_Sans',sans-serif]">
      <TitleBar />
      <Tabs />
      <Ribbon />
      <main className="flex min-h-0 flex-1">
        <Panel />
        <div className="ml-px flex min-w-0 flex-1 flex-col">
          <div className="flex min-h-0 flex-1 border-b border-[#bcbcbc]">
            <div className="flex flex-1 justify-center pt-[12px] pb-[13px]"><Slide /></div>
            <div className="mr-px flex w-[19px] flex-col pt-[3px] text-[#6d6d6d]">
              <Arrow up />
              <div className="flex-1 bg-[#dadada] pt-[436px]"><div className="h-[20px] border border-[#ababab] bg-white" /></div>
              <Arrow />
              <button aria-label="Previous slide" className="grid h-6 place-items-center"><Svg w={10} h={10} stroke="none"><path d="M0 5l5-5 5 5zM0 10l5-5 5 5z" fill="currentColor" /></Svg></button>
              <button aria-label="Next slide" className="mb-6 grid h-5 place-items-center"><Svg w={10} h={10} stroke="none"><path d="M0 0l5 5 5-5zM0 5l5 5 5-5z" fill="currentColor" /></Svg></button>
            </div>
          </div>
          <div className="h-[2px]" />
        </div>
      </main>
      <StatusBar />
      <Taskbar />
    </div>
  );
}
